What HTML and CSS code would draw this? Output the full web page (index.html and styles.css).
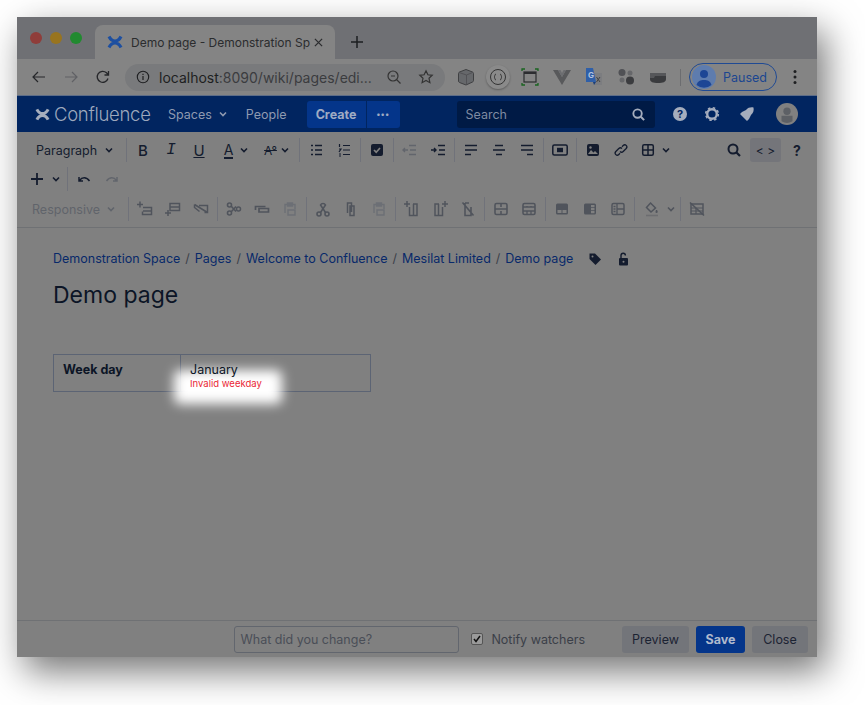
FILE: index.html
```html
<!DOCTYPE html>
<html>
    <head>
        <meta charset="utf-8">
        <title>Demo page - Demonstration Space</title>
        <link rel="stylesheet" href="styles.css">
    </head>
    <body>
        <svg class="defs" width="0" height="0">
            <defs>
                <symbol id="chev" viewBox="0 0 10 10"><path d="M2 3.500l3 3 3-3" fill="none" stroke="currentColor" stroke-width="1.600"/></symbol>
                <symbol id="logo" viewBox="0 0 16 16"><path d="M2 2.500C5 8.500 11 8.500 14 2.500M2 13.500C5 7.500 11 7.500 14 13.500" fill="none" stroke="currentColor" stroke-width="3.200"/></symbol>
                <symbol id="search" viewBox="0 0 16 16"><circle cx="7" cy="7" r="4.500" fill="none" stroke="currentColor" stroke-width="2"/><path d="M10.500 10.500L14 14" stroke="currentColor" stroke-width="2.200"/></symbol>
                <symbol id="bullets" viewBox="0 0 16 16"><path d="M7 3.500h7M7 8h7M7 12.500h7M3 3.500h2M3 8h2M3 12.500h2" stroke="currentColor" stroke-width="1.400" fill="none"/></symbol>
                <symbol id="numbers" viewBox="0 0 16 16"><path d="M7 3.500h7M7 8h7M7 12.500h7M3.500 2v3M3 7h2l-2 3M3 12h2M3 14h2" stroke="currentColor" stroke-width="1.200" fill="none"/></symbol>
                <symbol id="check" viewBox="0 0 16 16"><rect x="2" y="2" width="12" height="12" rx="2" fill="currentColor"/><path d="M5 8l2.200 2.200L11 6" stroke="#808080" stroke-width="1.700" fill="none"/></symbol>
                <symbol id="outdent" viewBox="0 0 16 16"><path d="M7 3.500h7M8 8h6M7 12.500h7M1 8h5M3 6L1 8l2 2" stroke="currentColor" stroke-width="1.400" fill="none"/></symbol>
                <symbol id="indent" viewBox="0 0 16 16"><path d="M8 3.500h7M9 8h6M8 12.500h7M1 8h5M4 6l2 2-2 2" stroke="currentColor" stroke-width="1.400" fill="none"/></symbol>
                <symbol id="left" viewBox="0 0 16 16"><path d="M2 3.500h12M2 8h12M2 12.500h6" stroke="currentColor" stroke-width="1.500" fill="none"/></symbol>
                <symbol id="center" viewBox="0 0 16 16"><path d="M4 3.500h8M2 8h12M5 12.500h6" stroke="currentColor" stroke-width="1.500" fill="none"/></symbol>
                <symbol id="right" viewBox="0 0 16 16"><path d="M2 3.500h12M2 8h12M8 12.500h6" stroke="currentColor" stroke-width="1.500" fill="none"/></symbol>
                <symbol id="layout" viewBox="0 0 16 16"><rect x=".8" y="3" width="14.400" height="10" rx="1.500" fill="none" stroke="currentColor" stroke-width="1.500"/><rect x="5" y="5.800" width="6" height="4.400" fill="currentColor"/></symbol>
                <symbol id="image" viewBox="0 0 16 16"><rect x="2" y="2" width="12" height="12" rx="2" fill="currentColor"/><path d="M3 12l3-4 2.500 2.500L10 9l3 3z" fill="#808080"/><circle cx="5.500" cy="5.500" r="1.200" fill="#808080"/></symbol>
                <symbol id="link" viewBox="0 0 16 16"><path d="M7 9.500c1 1 2.200 1 3.200 0l3-3c2-2.300-1-5-3-3L9 4.700M9 6.500c-1-1-2.200-1-3.200 0l-3 3c-2 2.300 1 5 3 3L7 11.300" stroke="currentColor" stroke-width="1.300" fill="none"/></symbol>
                <symbol id="table" viewBox="0 0 16 16"><rect x="2.700" y="2.700" width="10.600" height="10.600" rx="1.500" fill="none" stroke="currentColor" stroke-width="1.500"/><path d="M8 3v10M3 8h10" stroke="currentColor" stroke-width="1.500"/></symbol>
                <symbol id="undo" viewBox="0 0 16 16"><path d="M3 6v4h4M3.500 9.500C6 6 10.500 5.800 13.500 10" stroke="currentColor" stroke-width="1.500" fill="none"/></symbol>
                <symbol id="redo" viewBox="0 0 16 16"><path d="M13 6v4H9M12.500 9.500C10 6 5.500 5.800 2.500 10" stroke="currentColor" stroke-width="1.500" fill="none"/></symbol>
                <symbol id="row-above" viewBox="0 0 16 16"><path d="M0 3.500h6M3 .5v6M6 6.500h8.500v7H5.500v-3M6 10h8" stroke="currentColor" stroke-width="1.500" fill="none"/></symbol>
                <symbol id="row-below" viewBox="0 0 16 16"><path d="M5 2.500h9.500v7H5zM5 6h9M0 12h6M3 9v6" stroke="currentColor" stroke-width="1.500" fill="none"/></symbol>
                <symbol id="row-del" viewBox="0 0 16 16"><path d="M1.500 3.500l13 8M1.500 3.500v3l5 4M6 4.500h8.500v7h-3" stroke="currentColor" stroke-width="1.500" fill="none"/></symbol>
                <symbol id="cut" viewBox="0 0 16 16"><circle cx="3.500" cy="4" r="2" fill="none" stroke="currentColor" stroke-width="1.600"/><circle cx="3.500" cy="12" r="2" fill="none" stroke="currentColor" stroke-width="1.600"/><path d="M5 5l5 5.500M5 11l5-5.500" stroke="currentColor" stroke-width="1.600"/><circle cx="12.500" cy="8" r="2" fill="none" stroke="currentColor" stroke-width="1.500"/></symbol>
                <symbol id="copy-row" viewBox="0 0 16 16"><path d="M1.500 9V5.500h10M5 7.500h9.500V11H5z" stroke="currentColor" stroke-width="1.700" fill="none"/></symbol>
                <symbol id="paste" viewBox="0 0 16 16"><path d="M3 12V3.500h10V8M5.500 2h5v3h-5zM6 9h7v5H6z" stroke="currentColor" stroke-width="1.400" fill="none"/></symbol>
                <symbol id="cut-col" viewBox="0 0 16 16"><circle cx="4" cy="13" r="2" fill="none" stroke="currentColor" stroke-width="1.600"/><circle cx="12" cy="13" r="2" fill="none" stroke="currentColor" stroke-width="1.600"/><path d="M5.500 11.500L10.500 4a2.800 2.800 0 0 0-5 0l5 7.500" stroke="currentColor" stroke-width="1.600" fill="none"/></symbol>
                <symbol id="copy-col" viewBox="0 0 16 16"><path d="M8.500 11V2h-4v10M7 5h4v9.500H7z" stroke="currentColor" stroke-width="1.500" fill="none"/></symbol>
                <symbol id="col-before" viewBox="0 0 16 16"><path d="M0 3h6M3 0v6M5.500 6v8.500H13V3H9M9.500 3v11" stroke="currentColor" stroke-width="1.500" fill="none"/></symbol>
                <symbol id="col-after" viewBox="0 0 16 16"><path d="M10 3h6M13 0v6M10.500 6v8.500H3V3h4M6.500 3v11" stroke="currentColor" stroke-width="1.500" fill="none"/></symbol>
                <symbol id="col-del" viewBox="0 0 16 16"><path d="M5 2v12.500h6V6M5 2h4M2.500 1.500l11 13" stroke="currentColor" stroke-width="1.600" fill="none"/></symbol>
                <symbol id="merge" viewBox="0 0 16 16"><rect x="2" y="2.500" width="12" height="11" rx="1.500" fill="none" stroke="currentColor" stroke-width="1.600"/><path d="M2 8h12M8 3v3M8 10v3" stroke="currentColor" stroke-width="1.600"/></symbol>
                <symbol id="split" viewBox="0 0 16 16"><rect x="2" y="2.500" width="12" height="11" rx="1.500" fill="none" stroke="currentColor" stroke-width="1.600"/><path d="M2 6h12M2 10h12M6 5v1M10 5v1M6 10v3M10 10v3" stroke="currentColor" stroke-width="1.300"/></symbol>
                <symbol id="head-row" viewBox="0 0 16 16"><rect x="2" y="2.500" width="12" height="11" rx="1.500" fill="currentColor"/><path d="M3.500 9h4v3h-4zM8.500 9h4v3h-4z" fill="#808080"/></symbol>
                <symbol id="head-col" viewBox="0 0 16 16"><rect x="2" y="2.500" width="12" height="11" rx="1.500" fill="currentColor"/><path d="M9 4h3.500v2.300H9zM9 7h3.500v2.300H9zM9 10h3.500v2.300H9z" fill="#808080"/></symbol>
                <symbol id="numbered" viewBox="0 0 16 16"><rect x="2" y="2.500" width="12" height="11" rx="1.500" fill="none" stroke="currentColor" stroke-width="1.500"/><path d="M7 3v10M7 8h7M3.500 5.500h2M3.500 8h2M3.500 10.500h2" stroke="currentColor" stroke-width="1.300"/></symbol>
                <symbol id="fill" viewBox="0 0 16 16"><path d="M6.500 2l5 5-4.500 4-4.500-4.500z" fill="none" stroke="currentColor" stroke-width="1.500"/><path d="M13 9c1 1.500 1 3-.5 3s-1-2-.5-3z" fill="currentColor"/><path d="M2 14.500h12" stroke="#6c6d70" stroke-width="1.600"/></symbol>
                <symbol id="no-table" viewBox="0 0 16 16"><path d="M2 3h12v10H2z" fill="none" stroke="currentColor" stroke-width="1.500"/><path d="M2 7h12M7 7v6M2 10h12" stroke="currentColor" stroke-width="1.200"/><path d="M1 1.500l14 13" stroke="currentColor" stroke-width="1.700"/></symbol>
            </defs>
        </svg>

        <div class="window">
            <div class="tabstrip">
                <div class="lights">
                    <span class="light red"></span>
                    <span class="light yellow"></span>
                    <span class="light green"></span>
                </div>
                <div class="tab">
                    <svg class="favicon"><use href="#logo"/></svg>
                    <span class="tab-title">Demo page - Demonstration Sp</span>
                    <svg class="tab-close" viewBox="0 0 10 10"><path d="M1 1l8 8M9 1l-8 8" stroke="currentColor" stroke-width="1.400"/></svg>
                </div>
                <svg class="new-tab" viewBox="0 0 12 12"><path d="M6 0v12M0 6h12" stroke="currentColor" stroke-width="1.500"/></svg>
            </div>

            <div class="chrome-bar">
                <svg class="chrome-ico" viewBox="0 0 16 16"><path d="M14 8H2M7 3L2 8l5 5" fill="none" stroke="currentColor" stroke-width="1.200"/></svg>
                <svg class="chrome-ico off" viewBox="0 0 16 16"><path d="M2 8h12M9 3l5 5-5 5" fill="none" stroke="currentColor" stroke-width="1.200"/></svg>
                <svg class="chrome-ico" viewBox="0 0 16 16"><path d="M13 9.500A5.500 5.500 0 1 1 11.500 3.800L13 5.500M13.500 2v4h-4" fill="none" stroke="currentColor" stroke-width="1.300"/></svg>
                <div class="omnibox">
                    <svg class="info" viewBox="0 0 14 14"><circle cx="7" cy="7" r="5.700" fill="none" stroke="currentColor" stroke-width="1.100"/><path d="M7 6v4M7 3.700v1.300" stroke="currentColor" stroke-width="1.200"/></svg>
                    <span class="url">localhost<span class="url-rest">:8090/wiki/pages/edi...</span></span>
                    <svg class="omni-ico" viewBox="0 0 16 16"><circle cx="7" cy="7" r="5" fill="none" stroke="currentColor" stroke-width="1.200"/><path d="M10.500 10.500L14.500 14.500M5 7h4" stroke="currentColor" stroke-width="1.200"/></svg>
                    <svg class="omni-ico star" viewBox="0 0 16 16"><path d="M8 1.800l1.900 4 4.300.5-3.200 3 .9 4.400L8 11.500l-3.900 2.200.9-4.400-3.200-3 4.300-.5z" fill="none" stroke="currentColor" stroke-width="1.200"/></svg>
                </div>
                <div class="exts">
                    <svg class="ext" viewBox="0 0 18 18"><path d="M9 1.500l6.500 2.500q1 .5 1 1.500v7q0 1-1 1.500L9 17 2.500 14.500q-1-.5-1-1.500V5.500q0-1 1-1.500z" fill="#66686b" stroke="#3f4042"/><path d="M2 4.500L9.500 7l6-2.500M9.500 7v10" fill="none" stroke="#4c4d50" stroke-width=".8"/></svg>
                    <span class="ext-ring"><svg viewBox="0 0 18 18"><circle cx="9" cy="9" r="7.500" fill="none" stroke="#333" stroke-width="1"/><path d="M7 6c-1.500 0-1 3-2 3 1 0 .5 3 2 3M11 6c1.500 0 1 3 2 3-1 0-.5 3-2 3" fill="none" stroke="#333"/></svg></span>
                    <svg class="ext" viewBox="0 0 18 18"><rect x="3" y="4" width="12" height="10" fill="none" stroke="#2c2d30" stroke-width="1.200"/><path d="M3 4h12v2H3z" fill="#2c2d30"/><path d="M1 3V1h3M14 1h3v2M1 15v2h3M14 17h3v-2" fill="none" stroke="#19641f" stroke-width="1.300"/></svg>
                    <svg class="ext" viewBox="0 0 18 18"><path d="M0 2h5l4 7 4-7h5L9 17z" fill="#58595b"/><path d="M5 2h2.500L9 5l1.500-3H13L9 9z" fill="#6c6d70"/></svg>
                    <svg class="ext" viewBox="0 0 18 18"><path d="M9 5h8v12H9z" fill="#7c7d80"/><path d="M11.500 9l3.500 5M15 9l-3.500 5" stroke="#444"/><path d="M1 0h7l3 14H1z" fill="#2f5fa8"/><path d="M8 14h3l-2 3z" fill="#1b3e78"/><text x="3" y="10" class="ext-g">G</text></svg>
                    <svg class="ext" viewBox="0 0 18 18"><circle cx="5" cy="4.500" r="3.500" fill="#505155"/><circle cx="13" cy="5" r="2.500" fill="#66676a"/><circle cx="5" cy="12" r="2.500" fill="#66676a"/><circle cx="13" cy="12.500" r="4" fill="#3b3c3f"/></svg>
                    <svg class="ext" viewBox="0 0 18 18"><path d="M1 5h16v6c0 3-3 4-8 4s-8-1-8-4z" fill="#3a3b3e"/><path d="M1 5h16v3H6l-1 2H1z" fill="#56575a"/></svg>
                </div>
                <span class="bar-sep"></span>
                <div class="profile">
                    <svg class="profile-pic" viewBox="0 0 24 24"><circle cx="12" cy="12" r="12" fill="#5e7cae"/><circle cx="12" cy="9" r="4" fill="#1d4695"/><path d="M4.500 20c1-4 4-5 7.500-5s6.500 1 7.500 5a12 12 0 0 1-15 0z" fill="#1d4695"/></svg>
                    <span>Paused</span>
                </div>
                <svg class="kebab" viewBox="0 0 4 16"><circle cx="2" cy="2.500" r="1.500" fill="currentColor"/><circle cx="2" cy="8" r="1.500" fill="currentColor"/><circle cx="2" cy="13.500" r="1.500" fill="currentColor"/></svg>
            </div>

            <nav class="topnav">
                <a class="brand"><svg class="brand-ico"><use href="#logo"/></svg>Confluence</a>
                <a class="nav-link">Spaces <svg class="nav-chev"><use href="#chev"/></svg></a>
                <a class="nav-link">People</a>
                <div class="create-group">
                    <button class="create">Create</button>
                    <button class="create more">&#8226;&#8226;&#8226;</button>
                </div>
                <div class="search-box">
                    <span>Search</span>
                    <svg class="search-ico"><use href="#search"/></svg>
                </div>
                <svg class="nav-ico" viewBox="0 0 16 16"><circle cx="8" cy="8" r="7" fill="currentColor"/><text x="8" y="12" text-anchor="middle" class="help-mark">?</text></svg>
                <svg class="nav-ico" viewBox="0 0 16 16"><circle cx="8" cy="8" r="4.800" fill="none" stroke="currentColor" stroke-width="2.400"/><circle cx="8" cy="8" r="6.300" fill="none" stroke="currentColor" stroke-width="1.600" stroke-dasharray="2.500 2.450"/></svg>
                <svg class="nav-ico bell" viewBox="0 0 16 16"><path d="M14.500 1.500C12 1 9 1.500 7 4L3 6l-2 2 7 7 2-2 2-4c2.500-2 3-5 2.500-7.500z" fill="currentColor"/></svg>
                <svg class="nav-avatar" viewBox="0 0 24 24"><circle cx="12" cy="12" r="12" fill="#808080"/><circle cx="12" cy="9" r="4" fill="#5d6065"/><path d="M6 14h12v6a12 12 0 0 1-12 0z" fill="#5d6065"/></svg>
            </nav>

            <div class="editor-tools">
                <div class="tool-row first">
                    <span class="drop para">Paragraph <svg class="chev"><use href="#chev"/></svg></span>
                    <span class="sep"></span>
                    <span class="tool letter bold">B</span>
                    <span class="tool letter ital">I</span>
                    <span class="tool letter under">U</span>
                    <span class="tool wide letter color"><span class="color-a">A</span><svg class="chev"><use href="#chev"/></svg></span>
                    <span class="tool wide letter clear"><span class="clear-a">A°</span><svg class="chev"><use href="#chev"/></svg></span>
                    <span class="sep"></span>
                    <span class="tool"><svg class="ico"><use href="#bullets"/></svg></span>
                    <span class="tool"><svg class="ico"><use href="#numbers"/></svg></span>
                    <span class="sep"></span>
                    <span class="tool"><svg class="ico"><use href="#check"/></svg></span>
                    <span class="sep"></span>
                    <span class="tool off"><svg class="ico"><use href="#outdent"/></svg></span>
                    <span class="tool"><svg class="ico"><use href="#indent"/></svg></span>
                    <span class="sep"></span>
                    <span class="tool"><svg class="ico"><use href="#left"/></svg></span>
                    <span class="tool"><svg class="ico"><use href="#center"/></svg></span>
                    <span class="tool"><svg class="ico"><use href="#right"/></svg></span>
                    <span class="sep"></span>
                    <span class="tool"><svg class="ico"><use href="#layout"/></svg></span>
                    <span class="sep"></span>
                    <span class="tool"><svg class="ico"><use href="#image"/></svg></span>
                    <span class="tool"><svg class="ico"><use href="#link"/></svg></span>
                    <span class="tool wide table-drop"><svg class="ico"><use href="#table"/></svg><svg class="chev"><use href="#chev"/></svg></span>
                    <span class="right-tools">
                        <span class="tool"><svg class="ico"><use href="#search"/></svg></span>
                        <span class="tool code">&lt; &gt;</span>
                        <span class="tool letter q">?</span>
                    </span>
                </div>
                <div class="tool-row second">
                    <span class="tool wide plus"><svg class="ico" viewBox="0 0 16 16"><path d="M8 2v12M2 8h12" stroke="currentColor" stroke-width="1.800"/></svg><svg class="chev"><use href="#chev"/></svg></span>
                    <span class="sep"></span>
                    <span class="tool"><svg class="ico"><use href="#undo"/></svg></span>
                    <span class="tool off"><svg class="ico"><use href="#redo"/></svg></span>
                </div>
                <div class="tool-row third">
                    <span class="drop resp">Responsive <svg class="chev"><use href="#chev"/></svg></span>
                    <span class="sep"></span>
                    <span class="tool"><svg class="ico"><use href="#row-above"/></svg></span>
                    <span class="tool"><svg class="ico"><use href="#row-below"/></svg></span>
                    <span class="tool"><svg class="ico"><use href="#row-del"/></svg></span>
                    <span class="sep"></span>
                    <span class="tool"><svg class="ico"><use href="#cut"/></svg></span>
                    <span class="tool"><svg class="ico"><use href="#copy-row"/></svg></span>
                    <span class="tool off"><svg class="ico"><use href="#paste"/></svg></span>
                    <span class="sep"></span>
                    <span class="tool"><svg class="ico"><use href="#cut-col"/></svg></span>
                    <span class="tool"><svg class="ico"><use href="#copy-col"/></svg></span>
                    <span class="tool off"><svg class="ico"><use href="#paste"/></svg></span>
                    <span class="sep"></span>
                    <span class="tool"><svg class="ico"><use href="#col-before"/></svg></span>
                    <span class="tool"><svg class="ico"><use href="#col-after"/></svg></span>
                    <span class="tool"><svg class="ico"><use href="#col-del"/></svg></span>
                    <span class="sep"></span>
                    <span class="tool"><svg class="ico"><use href="#merge"/></svg></span>
                    <span class="tool"><svg class="ico"><use href="#split"/></svg></span>
                    <span class="sep"></span>
                    <span class="tool"><svg class="ico"><use href="#head-row"/></svg></span>
                    <span class="tool"><svg class="ico"><use href="#head-col"/></svg></span>
                    <span class="tool"><svg class="ico"><use href="#numbered"/></svg></span>
                    <span class="sep"></span>
                    <span class="tool wide fill-drop"><svg class="ico"><use href="#fill"/></svg><svg class="chev"><use href="#chev"/></svg></span>
                    <span class="sep"></span>
                    <span class="tool"><svg class="ico"><use href="#no-table"/></svg></span>
                </div>
            </div>

            <main class="page">
                <div class="crumbs">
                    <a>Demonstration Space</a><i>/</i><a>Pages</a><i>/</i><a>Welcome to Confluence</a><i>/</i><a>Mesilat Limited</a><i>/</i><a>Demo page</a>
                    <svg class="crumb-ico first" viewBox="0 0 14 14"><path d="M1.500 1.500h5.500l6 6-5.500 5.500-6-6z" fill="currentColor"/><circle cx="4.500" cy="4.500" r="1" fill="#808080"/></svg>
                    <svg class="crumb-ico" viewBox="0 0 14 14"><rect x="3" y="6" width="9" height="7.500" rx="1" fill="currentColor"/><path d="M5 6V3.500a2.200 2.200 0 0 1 4.400 0" fill="none" stroke="currentColor" stroke-width="1.400"/><circle cx="7.500" cy="9.700" r="1" fill="#808080"/></svg>
                </div>
                <h1>Demo page</h1>
                <table class="content-table">
                    <tr>
                        <th>Week day</th>
                        <td>
                            <div class="spot"></div>
                            <div class="cell-text">January</div>
                            <div class="cell-error">Invalid weekday</div>
                        </td>
                    </tr>
                </table>
            </main>

            <footer class="savebar">
                <input class="comment" type="text" placeholder="What did you change?">
                <label class="watch"><span class="checkbox"><svg viewBox="0 0 10 10"><path d="M2 5l2 2.500L8 2" fill="none" stroke="#111" stroke-width="1.500"/></svg></span>Notify watchers</label>
                <button class="btn preview">Preview</button>
                <button class="btn save">Save</button>
                <button class="btn close">Close</button>
            </footer>
        </div>
    </body>
</html>
```

FILE: styles.css
```css
body {
    margin: 0;
    padding: 17px 48px 48px 17px;
    background-color: #fff;
    font-family: Inter, 'Liberation Sans', sans-serif;
}

.defs {
    position: absolute;
}

.window {
    width: 800px;
    height: 640px;
    display: flex;
    flex-direction: column;
    background-color: #808080;
    box-shadow: 8px 14px 34px rgba(0,0,0,0.55);
}

/* browser tabs */
.tabstrip {
    height: 42px;
    background-color: #6f7074;
    display: flex;
    align-items: flex-end;
    flex-shrink: 0;
}

.lights {
    display: flex;
    gap: 8px;
    align-self: center;
    margin-left: 13px;
    width: 65px;
}

.light {
    width: 12px;
    height: 12px;
    border-radius: 50%;
}

.red { background-color: #8f3d3a; }
.yellow { background-color: #98741f; }
.green { background-color: #218a30; }

.tab {
    width: 240px;
    height: 34px;
    box-sizing: border-box;
    padding: 0 12px;
    background-color: #848484;
    border-radius: 8px 8px 0 0;
    display: flex;
    align-items: center;
    color: #2b2c2e;
    font-size: 12px;
}

.favicon {
    width: 16px;
    height: 16px;
    color: #1d4fa0;
    flex-shrink: 0;
    margin-right: 8px;
}

.tab-title {
    flex: 1;
    white-space: nowrap;
}

.tab-close {
    width: 9px;
    height: 9px;
}

.new-tab {
    width: 12px;
    height: 12px;
    margin: 0 0 11px 16px;
    color: #1d1e20;
}

/* address bar */
.chrome-bar {
    height: 37px;
    background-color: #848484;
    display: flex;
    align-items: center;
    padding-left: 14px;
    border-bottom: 1px solid #5d6d88;
    box-sizing: border-box;
    flex-shrink: 0;
}

.chrome-ico {
    width: 16px;
    height: 16px;
    margin-right: 16px;
    color: #26272a;
}

.chrome-ico.off {
    color: #606165;
}

.omnibox {
    width: 320px;
    height: 27px;
    margin-left: -2px;
    background-color: #797a7c;
    border-radius: 14px;
    display: flex;
    align-items: center;
    padding-left: 11px;
    box-sizing: border-box;
    color: #1e1f21;
}

.info {
    width: 14px;
    height: 14px;
    margin-right: 9px;
}

.url {
    font-size: 14px;
    width: 224px;
    white-space: nowrap;
}

.url-rest {
    color: #3b3c3f;
}

.omni-ico {
    width: 16px;
    height: 16px;
    color: #333;
    margin-left: 3px;
}

.omni-ico.star {
    margin-left: 16px;
}

.exts {
    display: flex;
    align-items: center;
    gap: 14px;
    margin-left: 12px;
}

.ext {
    width: 18px;
    height: 18px;
}

.ext-g {
    font-size: 8px;
    font-weight: 700;
    fill: #b7c4dc;
}

.ext-ring {
    width: 24px;
    height: 24px;
    margin: 0 -3px;
    border-radius: 50%;
    background-color: #8a8a8a;
    box-shadow: 0 1px 2px rgba(0,0,0,0.3);
    display: flex;
    align-items: center;
    justify-content: center;
}

.ext-ring svg {
    width: 18px;
    height: 18px;
}

.bar-sep {
    width: 1px;
    height: 17px;
    background-color: #6c6d70;
    margin: 0 8px 0 13px;
}

.profile {
    width: 88px;
    height: 28px;
    box-sizing: border-box;
    border: 1px solid #1f4a94;
    border-radius: 14px;
    display: flex;
    align-items: center;
    padding-left: 2px;
    gap: 7px;
    font-size: 12.500px;
    color: #1b4690;
}

.profile-pic {
    width: 24px;
    height: 24px;
}

.kebab {
    width: 4px;
    height: 16px;
    margin-left: 16px;
    color: #1e1f21;
}

/* confluence nav */
.topnav {
    height: 36px;
    background-color: #012560;
    display: flex;
    align-items: center;
    padding-left: 18px;
    color: #8f9ab0;
    font-size: 12.500px;
    flex-shrink: 0;
}

.brand {
    display: flex;
    align-items: center;
    font-size: 18.500px;
    letter-spacing: -0.3px;
    width: 133px;
    font-weight: 300;
    color: #9da8bd;
}

.brand-ico {
    width: 15px;
    height: 15px;
    margin-right: 4px;
    color: #a5adbd;
}

.nav-link {
    margin-right: 18px;
    display: flex;
    align-items: center;
    gap: 6px;
}

.nav-chev {
    width: 10px;
    height: 10px;
}

.create-group {
    display: flex;
    gap: 1px;
    margin-left: 2px;
}

.create {
    height: 27px;
    width: 59px;
    padding: 0;
    border: none;
    border-radius: 3px 0 0 3px;
    background-color: #04358a;
    color: #9fabc3;
    font-family: inherit;
    font-size: 12.500px;
    font-weight: 700;
}

.create.more {
    width: 33px;
    border-radius: 0 3px 3px 0;
    font-size: 8px;
    letter-spacing: 0.500px;
}

.search-box {
    width: 198px;
    height: 27px;
    margin-left: 57px;
    margin-right: 17px;
    box-sizing: border-box;
    padding: 0 9px;
    background-color: #001a45;
    border-radius: 3px;
    display: flex;
    align-items: center;
    justify-content: space-between;
    color: #7f8aa1;
}

.search-ico {
    width: 15px;
    height: 15px;
    color: #a5adbd;
}

.nav-ico {
    width: 16px;
    height: 16px;
    margin-right: 16px;
    color: #a5adbd;
}

.nav-ico.bell {
    margin-left: 3px;
    margin-right: 21px;
}

.help-mark {
    font-size: 11px;
    font-weight: 700;
    fill: #012560;
}

.nav-avatar {
    width: 22px;
    height: 22px;
}

/* editor toolbar */
.editor-tools {
    height: 96px;
    box-sizing: border-box;
    border-bottom: 1px solid #6f7174;
    color: #141c2e;
    flex-shrink: 0;
}

.tool-row {
    display: flex;
    align-items: center;
    height: 24px;
}

.tool-row.first {
    margin-top: 6px;
}

.tool-row.second {
    margin-top: 5px;
    padding-left: 8px;
}

.tool-row.third {
    margin-top: 6px;
    color: #50545c;
}

.drop {
    font-size: 12.500px;
    display: flex;
    align-items: center;
    justify-content: space-between;
    box-sizing: border-box;
    width: 107px;
    padding: 0 10px 0 19px;
}

.drop.resp {
    width: 109px;
    padding-left: 15px;
    color: #60646b;
}

.chev {
    width: 10px;
    height: 10px;
    flex-shrink: 0;
}

.sep {
    width: 1px;
    height: 24px;
    background-color: #70727a;
    margin: 0 2px;
    flex-shrink: 0;
}

.tool {
    width: 28px;
    height: 24px;
    display: flex;
    align-items: center;
    justify-content: center;
    flex-shrink: 0;
}

.tool.wide {
    width: 40px;
    gap: 6px;
}

.tool.wide.color {
    width: 41px;
}

.tool.wide.clear {
    width: 40px;
    gap: 3px;
}

.tool.table-drop {
    width: 38px;
    gap: 5px;
    padding-left: 2px;
    box-sizing: border-box;
}

.tool.fill-drop {
    width: 41px;
    padding-left: 4px;
    box-sizing: border-box;
}

.tool.off {
    color: #62656c;
}

.third .tool.off {
    color: #6c6f75;
}

.ico {
    width: 16px;
    height: 16px;
}

.letter {
    font-size: 15px;
}

.bold {
    font-weight: 500;
}

.ital {
    font-family: 'Liberation Mono', monospace;
    font-style: italic;
    font-size: 16px;
}

.under {
    text-decoration: underline;
}

.color {
    margin-left: 3px;
}

.color-a {
    font-size: 14px;
    line-height: 15px;
    border-bottom: 2px solid #141c2e;
}

.clear-a {
    font-size: 12px;
    text-decoration: line-through;
}

.q {
    font-weight: 700;
    font-size: 14px;
}

.right-tools {
    display: flex;
    align-items: center;
    margin-left: auto;
    margin-right: 6px;
}

.tool.code {
    width: 31px;
    background-color: #74757a;
    border-radius: 3px;
    font-size: 12px;
    margin: 0 2px;
}

/* page body */
.page {
    flex: 1;
    padding: 22px 36px 0;
}

.crumbs {
    display: flex;
    align-items: center;
    font-size: 12.500px;
    color: #08296a;
    line-height: 17px;
}

.crumbs i {
    font-style: normal;
    color: #3b3f48;
    margin: 0 5px;
}

.crumb-ico {
    width: 14px;
    height: 14px;
    color: #141c2e;
    margin-left: 14px;
}

.crumb-ico.first {
    margin-left: 15px;
}

h1 {
    font-size: 23px;
    font-weight: 400;
    color: #0c1526;
    margin: 13px 0 0;
    line-height: 30px;
}

.content-table {
    border-collapse: collapse;
    margin-top: 44px;
    width: 318px;
    font-size: 12.500px;
    color: #0c1526;
}

.content-table th,
.content-table td {
    border: 1px solid #5c6474;
    height: 37px;
    box-sizing: border-box;
    padding: 0 9px;
    vertical-align: top;
    text-align: left;
    position: relative;
}

.content-table th {
    width: 127px;
    padding-top: 7px;
    font-weight: 700;
}

.spot {
    position: absolute;
    left: -7px;
    top: 15px;
    width: 108px;
    height: 34px;
    background-color: #fff;
    border-radius: 6px;
    filter: blur(6px);
}

.cell-text {
    position: relative;
    padding-top: 7px;
    line-height: 15px;
}

.cell-error {
    position: relative;
    margin-top: 1px;
    font-size: 9.500px;
    line-height: 11px;
    color: #ea1f35;
}

/* bottom bar */
.savebar {
    height: 37px;
    box-sizing: border-box;
    border-top: 1px solid #6f7174;
    display: flex;
    align-items: center;
    justify-content: flex-end;
    padding-right: 9px;
    flex-shrink: 0;
}

.comment {
    width: 225px;
    height: 27px;
    box-sizing: border-box;
    margin: 1px 12px 0 0;
    padding: 0 5px;
    background-color: transparent;
    border: 1px solid #62666e;
    border-radius: 3px;
    font-family: inherit;
    font-size: 12.500px;
}

.comment::placeholder {
    color: #4a4e57;
}

.watch {
    display: flex;
    align-items: center;
    gap: 8px;
    margin-right: 30px;
    font-size: 12.500px;
    color: #3b3f48;
}

.checkbox {
    width: 10px;
    height: 10px;
    background-color: #9a9a9a;
    border: 1px solid #555;
    border-radius: 2px;
    display: flex;
}

.btn {
    height: 27px;
    padding: 0;
    margin-left: 7px;
    border: none;
    border-radius: 3px;
    background-color: #73757a;
    color: #1c2333;
    font-family: inherit;
    font-size: 12.500px;
}

.preview { width: 67px; }
.close { width: 56px; }

.btn.save {
    width: 49px;
    background-color: #04358a;
    color: #b0bacd;
    font-weight: 700;
}
```
